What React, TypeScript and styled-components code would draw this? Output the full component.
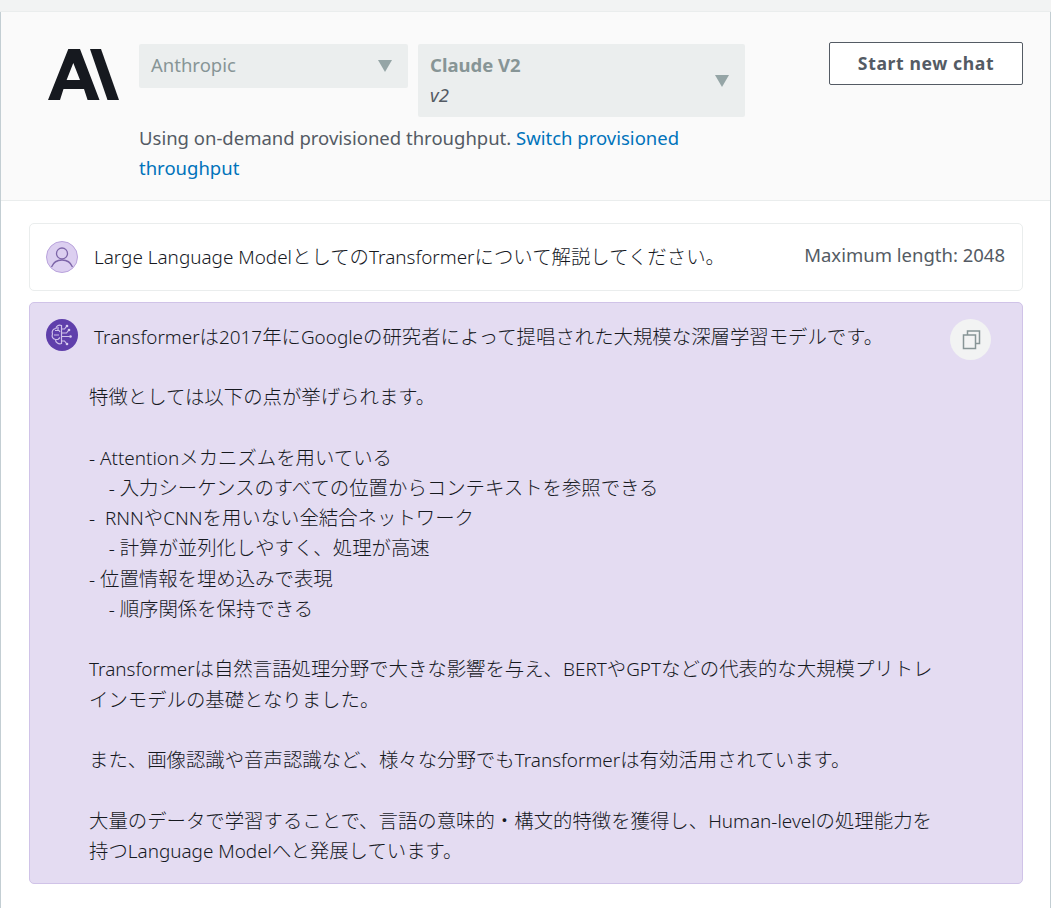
import React from "react";
import styled, { createGlobalStyle } from "styled-components";

const Global = createGlobalStyle`
  html, body { margin: 0; padding: 0; background: #fff; }
  body { font-family: "Noto Sans", "Noto Sans CJK JP", sans-serif; font-size: 18.5px; color: #16191f; }
`;

const Page = styled.div`
  width: 1051px;
  height: 908px;
  box-sizing: border-box;
  overflow: hidden;
  background: #fff;
`;
const TopStrip = styled.div`
  height: 12px;
  background: #f2f3f3;
  border-bottom: 1px solid #eaeded;
  box-sizing: border-box;
`;
const Frame = styled.div`
  height: 896px;
  box-sizing: border-box;
  border-left: 1px solid #c3ced3;
  border-right: 1px solid #c3ced3;
`;
const Header = styled.header`
  height: 189px;
  box-sizing: border-box;
  background: #fafafa;
  border-bottom: 1px solid #eaeded;
  display: flex;
  align-items: flex-start;
  padding: 30px 27px 0 47px;
`;
const Logo = styled.svg`
  width: 71px;
  height: 51px;
  margin-top: 7px;
  flex: none;
`;
const Controls = styled.div`
  margin-left: 20px;
  width: 606px;
  flex: none;
  padding-top: 2px;
`;
const SelectRow = styled.div`
  display: flex;
  align-items: flex-start;
  gap: 10px;
`;
const Select = styled.div<{ $w: number; $h: number }>`
  width: ${(p) => p.$w}px;
  height: ${(p) => p.$h}px;
  flex: none;
  box-sizing: border-box;
  background: #ebeeee;
  border-radius: 2px;
  padding: 0 16px 0 12px;
  display: flex;
  align-items: center;
  justify-content: space-between;
`;
const SelectValue = styled.span`
  color: #879596;
  margin-top: -4px;
`;
const SelectStack = styled.div`
  display: flex;
  flex-direction: column;
  line-height: 30px;
  margin-top: -2px;
`;
const SelectTitle = styled.span`
  color: #879596;
  font-weight: 700;
`;
const SelectSub = styled.span`
  color: #545b64;
  font-style: italic;
`;
const Caret = styled.svg`
  width: 14px;
  height: 12px;
  flex: none;
`;
const Note = styled.p`
  margin: 6px 0 0;
  width: 600px;
  color: #545b64;
  line-height: 30.2px;
`;
const NoteLink = styled.a`
  color: #0073bb;
  text-decoration: none;
`;
const NewChat = styled.button`
  margin-left: auto;
  width: 194px;
  height: 43px;
  flex: none;
  background: #fff;
  border: 1px solid #545b64;
  border-radius: 2px;
  color: #545b64;
  font-family: inherit;
  font-weight: 700;
  font-size: 17.6px;
  letter-spacing: 0.6px;
  padding: 0 0 2px;
`;
const Chat = styled.main`
  padding: 22px 27px 0 28px;
  display: flex;
  flex-direction: column;
  gap: 11px;
`;
const UserRow = styled.section`
  height: 68px;
  box-sizing: border-box;
  background: #fff;
  border: 1px solid #eaeded;
  border-radius: 5px;
  padding: 0 17px 0 16px;
  display: flex;
  align-items: center;
`;
const Avatar = styled.svg`
  width: 32px;
  height: 32px;
  flex: none;
`;
const UserText = styled.span`
  margin-left: 16px;
  color: #16191f;
  font-size: 18.9px;
  font-weight: 300;
`;
const MaxLength = styled.span`
  margin-left: auto;
  margin-top: -6px;
  color: #545b64;
`;
const AnswerCard = styled.section`
  height: 582px;
  box-sizing: border-box;
  background: #e4dcf2;
  border: 1px solid #d0c3e8;
  border-radius: 5px;
  padding: 16px 31px 0 16px;
`;
const AnswerHead = styled.div`
  display: flex;
  align-items: flex-start;
`;
const AnswerFirst = styled.span`
  margin-left: 16px;
  line-height: 36px;
  flex: 1;
  font-size: 18.9px;
  font-weight: 300;
`;
const CopyButton = styled.button`
  width: 41px;
  height: 41px;
  border: 0;
  padding: 0;
  border-radius: 50%;
  background: #f2f3f3;
  display: flex;
  align-items: center;
  justify-content: center;
  flex: none;
`;
const AnswerBody = styled.div`
  margin: 22px 0 0 43px;
  white-space: pre;
  line-height: 30.27px;
  color: #16191f;
  font-size: 18.9px;
  font-weight: 300;
`;
const Cjk = styled.span`
  font-family: "Noto Sans CJK JP", sans-serif;
  font-size: 19.4px;
  font-weight: 300;
  line-height: 1;
`;

function Mixed({ text }: { text: string }) {
  const parts = text.split(/([\u3000-\u30ff\u4e00-\u9fff\uff00-\uffef]+)/);
  return (
    <>
      {parts.map((p, i) => (i % 2 === 1 ? <Cjk key={i}>{p}</Cjk> : p))}
    </>
  );
}

const body = `特徴としては以下の点が挙げられます。

- Attentionメカニズムを用いている
    - 入力シーケンスのすべての位置からコンテキストを参照できる
-  RNNやCNNを用いない全結合ネットワーク
    - 計算が並列化しやすく、処理が高速
- 位置情報を埋め込みで表現
    - 順序関係を保持できる

Transformerは自然言語処理分野で大きな影響を与え、BERTやGPTなどの代表的な大規模プリトレ
インモデルの基礎となりました。

また、画像認識や音声認識など、様々な分野でもTransformerは有効活用されています。

大量のデータで学習することで、言語の意味的・構文的特徴を獲得し、Human-levelの処理能力を
持つLanguage Modelへと発展しています。`;

function CaretIcon() {
  return (
    <Caret viewBox="0 0 14 12">
      <path d="M0 0H14L7 12Z" fill="#95a5a6" />
    </Caret>
  );
}

export default function App() {
  return (
    <Page>
      <Global />
      <TopStrip />
      <Frame>
        <Header>
          <Logo viewBox="0 0 71 51">
            <path
              fill="#16191f"
              fillRule="evenodd"
              d="M20.3 0H32L51.5 51H39.6L36 40H15.5L12 51H0ZM25.3 14L18.6 31H32Z"
            />
            <path fill="#16191f" d="M42 0H53L71 51H59.5Z" />
          </Logo>
          <Controls>
            <SelectRow>
              <Select $w={269} $h={44}>
                <SelectValue>Anthropic</SelectValue>
                <CaretIcon />
              </Select>
              <Select $w={327} $h={73}>
                <SelectStack>
                  <SelectTitle>Claude V2</SelectTitle>
                  <SelectSub>v2</SelectSub>
                </SelectStack>
                <CaretIcon />
              </Select>
            </SelectRow>
            <Note>
              Using on-demand provisioned throughput.{" "}
              <NoteLink href="#">Switch provisioned throughput</NoteLink>
            </Note>
          </Controls>
          <NewChat>Start new chat</NewChat>
        </Header>
        <Chat>
          <UserRow>
            <Avatar viewBox="0 0 32 32">
              <circle cx="16" cy="16" r="15.5" fill="#dccff0" stroke="#b9a3dc" />
              <circle cx="16" cy="12.5" r="5.5" fill="none" stroke="#7d65a8" strokeWidth="1.3" />
              <path d="M5.500 26c2-5 6.500-7 10.500-7s8.500 2 10.500 7" fill="none" stroke="#7d65a8" strokeWidth="1.3" />
            </Avatar>
            <UserText>
              <Mixed text="Large Language ModelとしてのTransformerについて解説してください。" />
            </UserText>
            <MaxLength>Maximum length: 2048</MaxLength>
          </UserRow>
          <AnswerCard>
            <AnswerHead>
              <Avatar viewBox="0 0 32 32">
                <circle cx="16" cy="16" r="16" fill="#5f3fab" />
                <g fill="none" stroke="#cfc1ea" strokeWidth="1.2">
                  <path d="M15.500 6.500c-3-1-5.500 .5-5.500 3-3 0-4.500 3-3.500 5.500-1 2.500 0 5 3 5.500 0 3 3 5 6 4Z" />
                  <path d="M9 11.500h4l1 1.500M8 16h5M10 20.500h2l2-2M12 8v3" />
                  <path d="M15.500 10h3l2-2.500M15.500 14h5l2-2.500M15.500 17.500h8M15.500 22h3l2 2.500" />
                </g>
                <g fill="#d9cdf0">
                  <circle cx="21" cy="7" r="1.3" />
                  <circle cx="23" cy="11" r="1.3" />
                  <circle cx="24.500" cy="17.500" r="1.3" />
                  <circle cx="21" cy="25" r="1.3" />
                </g>
              </Avatar>
              <AnswerFirst>
                <Mixed text="Transformerは2017年にGoogleの研究者によって提唱された大規模な深層学習モデルです。" />
              </AnswerFirst>
              <CopyButton aria-label="copy">
                <svg width="20" height="20" viewBox="0 0 20 20" fill="none" stroke="#879596" strokeWidth="1.5">
                  <rect x="2.500" y="5" width="12" height="13.5" />
                  <path d="M6.500 5V1H18.500V13.500H14.500" />
                </svg>
              </CopyButton>
            </AnswerHead>
            <AnswerBody>
              <Mixed text={body} />
            </AnswerBody>
          </AnswerCard>
        </Chat>
      </Frame>
    </Page>
  );
}
